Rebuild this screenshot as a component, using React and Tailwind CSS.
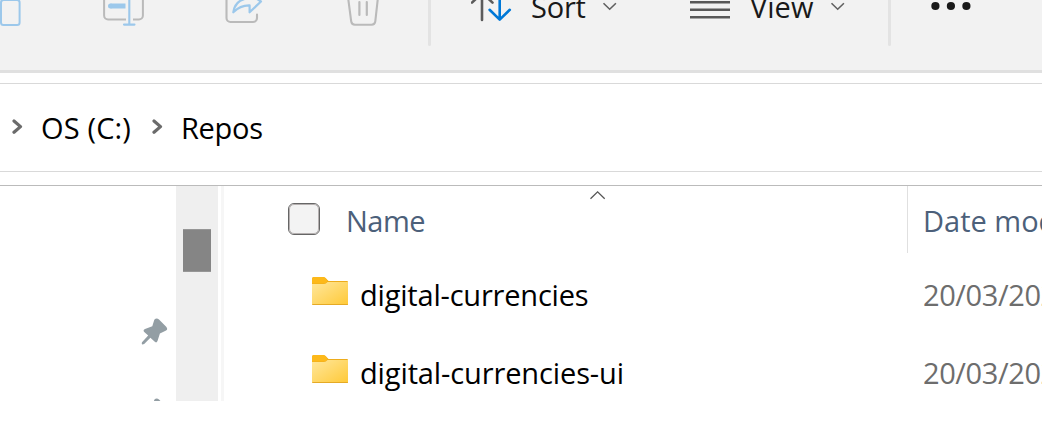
import React from "react";

function Toolbar() {
  return (
    <header className="flex h-[73px] shrink-0 items-start overflow-hidden border-b-[3px] border-[#e0e0e0] bg-[#f2f2f2]">
      <svg className="h-[30px] w-[103px] shrink-0" viewBox="0 0 103 30" fill="none">
        <rect x="1" y="0" width="18.6" height="25" rx="2.5" stroke="#9cc8eb" strokeWidth="2" />
      </svg>
      <svg className="h-[30px] w-[122px] shrink-0" viewBox="0 0 122 30" fill="none">
        <path d="M1.1-4V15.5a4 4 0 0 0 4 4H23M30 19.5h5.9a4 4 0 0 0 4-4V-4" stroke="#bababa" strokeWidth="2" />
        <path d="M7.5 6H22.5" stroke="#9cc8eb" strokeWidth="5" />
        <circle cx="7.5" cy="6" r="2.5" fill="#9cc8eb" />
        <path d="M26.3-4V24.6M21 24.6h10.5" stroke="#9cc8eb" strokeWidth="2.1" strokeLinecap="round" />
      </svg>
      <svg className="h-[30px] w-[121px] shrink-0" viewBox="0 0 121 30" fill="none">
        <path d="M1.5-4V18a4 4 0 0 0 4 4H28a4 4 0 0 0 4-4V14.5" stroke="#bababa" strokeWidth="2.1" strokeLinecap="round" />
        <path d="M8.3 12.3C9.5 3 15-1 24.4-2V-6L36 1.5 24.6 12.3V5.4C17 5.2 12.5 8 8.3 12.3Z" stroke="#9cc8eb" strokeWidth="2.2" strokeLinejoin="round" />
      </svg>
      <svg className="h-[30px] w-[82px] shrink-0" viewBox="0 0 82 30" fill="none">
        <path d="M2-3 5.2 21.4a3.8 3.8 0 0 0 3.8 3.3h16.5a3.8 3.8 0 0 0 3.8-3.3L32-3" stroke="#bababa" strokeWidth="2.1" />
        <path d="M13.4 2V15M20.8 2V15" stroke="#bababa" strokeWidth="2.2" strokeLinecap="round" />
      </svg>
      <div className="h-[46px] w-[3px] shrink-0 rounded-b-sm bg-[#e3e3e3]" />
      <svg className="ml-[40px] h-[30px] w-[60px] shrink-0" viewBox="0 0 60 30" fill="none">
        <path d="M11-5V20M1 2.6 5-1.2M21.5 2.6 17.5-1.2" stroke="#5b5b5b" strokeWidth="2.6" strokeLinecap="round" />
        <path d="M28.7-5V19.6M18.6 9.8 28.7 19.6 38.8 9.8" stroke="#0078d7" strokeWidth="2.6" strokeLinecap="round" strokeLinejoin="round" />
      </svg>
      <span className="-mt-[13px] w-[71px] shrink-0 text-[29px] leading-[40px] tracking-[-0.2px] text-[#191919]">Sort</span>
      <svg className="h-[14px] w-[16px] shrink-0" viewBox="0 0 16 14" fill="none">
        <path d="M1.5 3.2 7.7 9.2 13.9 3.2" stroke="#606060" strokeWidth="1.6" />
      </svg>
      <svg className="ml-[72px] h-[22px] w-[60px] shrink-0" viewBox="0 0 60 22" fill="none">
        <path d="M0 2.3H40M0 9.7H40M0 17.2H40" stroke="#585858" strokeWidth="2.4" />
      </svg>
      <span className="-mt-[13px] w-[80px] shrink-0 text-[29px] leading-[40px] text-[#191919]">View</span>
      <svg className="h-[14px] w-[16px] shrink-0" viewBox="0 0 16 14" fill="none">
        <path d="M1.5 3.2 7.7 9.2 13.9 3.2" stroke="#606060" strokeWidth="1.6" />
      </svg>
      <div className="ml-[42px] h-[46px] w-[3px] shrink-0 rounded-b-sm bg-[#e3e3e3]" />
      <svg className="ml-[40px] h-[14px] w-[44px] shrink-0" viewBox="0 0 44 14" fill="#191919">
        <circle cx="4.4" cy="6" r="4.1" />
        <circle cx="19.9" cy="6" r="4.1" />
        <circle cx="35.4" cy="6" r="4.1" />
      </svg>
    </header>
  );
}

function Crumb({ className, children }) {
  return (
    <>
      <svg className="mt-[33px] h-[20px] w-[12px] shrink-0" viewBox="0 0 12 20" fill="none">
        <path d="M2 4 8.5 9.6 2 15.3" stroke="#6b6b6b" strokeWidth="3.2" strokeLinecap="round" strokeLinejoin="round" />
      </svg>
      <span className={className}>{children}</span>
    </>
  );
}

function Folder() {
  return (
    <svg className="h-[30px] w-[48px] shrink-0" viewBox="0 0 48 30">
      <defs>
        <linearGradient id="folder" x1="0" y1="0" x2="1" y2="1">
          <stop offset="0" stopColor="#ffe79c" />
          <stop offset="1" stopColor="#ffc937" />
        </linearGradient>
      </defs>
      <path d="M0 2Q0 0 2 0H11Q13 0 14.5 2L16.5 4H35Q36 4 36 5V27H0Z" fill="#edac1c" />
      <path d="M0 2Q0 0 2 0H11Q13 0 14.5 2L15.6 4Q14.5 6.6 12 6.6H0Z" fill="#fdb91a" />
      <path d="M0 7H12Q14 7 15.5 5H36V28H1Q0 28 0 27Z" fill="url(#folder)" />
      <path d="M.3 27.5H35.8" stroke="#e5aa25" strokeWidth="1" />
    </svg>
  );
}

function Pin() {
  return (
    <svg className="h-[27px] w-[27px] shrink-0" viewBox="0 0 27 27" fill="#939ea4">
      <path d="M13.3 1.8Q15.5-.7 18 1.5L25.2 8.8Q27.5 11.5 24.6 12.8L18.9 15.5 16.6 22.8Q15.5 25.5 13.5 23.6L9.4 19.8 3.2 26Q0 27.3 1 24.2L7.2 17.6 3 13.7Q1.8 11.8 4 11L11.3 8.2Z" />
    </svg>
  );
}

function Row({ name, spacing }) {
  return (
    <div className="flex h-[78px] shrink-0 items-start pl-[88px]">
      <Folder />
      <span className={"-mt-[2px] w-[563px] shrink-0 text-[29px] leading-[40px] text-black " + spacing}>{name}</span>
      <span className="-mt-[2px] text-[29px] leading-[40px] tracking-[-0.4px] text-[#6d6d6d]">20/03/2023</span>
    </div>
  );
}

export default function App() {
  return (
    <div className="flex h-[442px] w-[1042px] flex-col overflow-hidden whitespace-nowrap bg-white font-['Open_Sans','Noto_Sans',sans-serif]">
      <Toolbar />
      <nav className="mt-[10px] flex h-[89px] shrink-0 items-start border-y border-[#d9d9d9] pl-[12px] text-[29px] leading-[40px] text-black">
        <Crumb className="ml-[17px] mt-[24px] w-[111px] shrink-0 tracking-[0.15px]">OS (C:)</Crumb>
        <Crumb className="ml-[17px] mt-[24px] shrink-0 tracking-[-0.3px]">Repos</Crumb>
      </nav>
      <div className="mt-[13px] flex h-[216px] shrink-0 overflow-hidden border-t border-[#bbbbbb]">
        <aside className="flex h-[215px] w-[176px] shrink-0 flex-col gap-[53px] pl-[141px] pt-[132px]">
          <Pin />
          <Pin />
        </aside>
        <div className="w-[42px] shrink-0 bg-[#efefef] px-[7px] pt-[43px]">
          <div className="h-[43px] border-y border-[#969696] bg-[#858585]" />
        </div>
        <div className="ml-[3px] w-[3px] shrink-0 bg-[#f6f6f6]" />
        <main className="w-[818px] shrink-0">
          <div className="flex h-[91px] items-start text-[29px] leading-[40px] text-[#4c607a]">
            <div className="ml-[64px] mt-[17px] flex h-[32px] w-[32px] shrink-0 rounded-[6px] border border-[#666666] bg-[#f3f3f3]">
              <div className="flex-1 rounded-[5px] border border-[#b5b0b0]" />
            </div>
            <span className="ml-[26px] mt-[15px] w-[244px] shrink-0 tracking-[-0.5px]">Name</span>
            <svg className="mt-[4px] h-[12px] w-[16px] shrink-0" viewBox="0 0 16 12" fill="none">
              <path d="M.5 8.7 7.6 1.8 14.7 8.7" stroke="#555" strokeWidth="1.3" />
            </svg>
            <div className="ml-[301px] h-[67px] w-px shrink-0 bg-[#e0e0e0]" />
            <span className="ml-[15px] mt-[15px]">Date modified</span>
          </div>
          <Row name="digital-currencies" spacing="tracking-[-0.2px]" />
          <Row name="digital-currencies-ui" spacing="tracking-[-0.12px]" />
        </main>
      </div>
    </div>
  );
}
